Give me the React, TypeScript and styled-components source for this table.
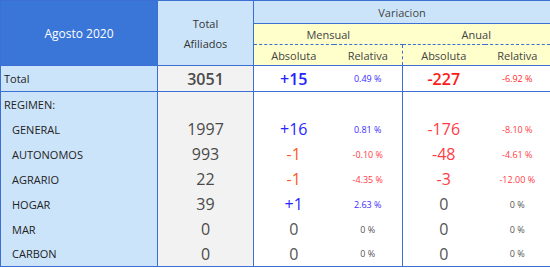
import React from "react";
import styled, { createGlobalStyle } from "styled-components";

const GlobalStyle = createGlobalStyle`
    body {
        margin: 0;
        background: #ffffff;
        font-family: "Open Sans", "Liberation Sans", sans-serif;
    }
`;

const LINE = "#3b6fd3";
const LIGHT = "#cce4fa";
const YELLOW = "#ffffcc";
const GREY = "#f2f2f2";

const Table = styled.table`
    width: 550px;
    table-layout: fixed;
    border-collapse: collapse;
    border: 1px solid ${LINE};
    font-family: "Open Sans", "Liberation Sans", sans-serif;
`;

const HeadRow = styled.tr<{ $h: number }>`
    height: ${(p) => p.$h}px;
`;

const TitleCell = styled.th`
    background: #3a75d8;
    color: #ffffff;
    font-size: 12px;
    font-weight: 400;
    border: 1px solid ${LINE};
`;

const TotalHead = styled.th`
    background: ${LIGHT};
    color: #333;
    font-size: 11px;
    font-weight: 400;
    line-height: 20px;
    border: 1px solid ${LINE};
    padding-top: 2px;
`;

const GroupHead = styled.th`
    background: ${LIGHT};
    color: #444;
    font-size: 11px;
    font-weight: 400;
    border: 1px solid ${LINE};
    padding: 0;
`;

const PeriodHead = styled.th`
    background: ${YELLOW};
    color: #444;
    font-size: 11px;
    font-weight: 400;
    border-bottom: 1px dashed ${LINE};
    padding: 0;
`;

const SubHead = styled.th<{ $dashed?: boolean }>`
    background: ${YELLOW};
    color: #444;
    font-size: 11px;
    font-weight: 400;
    padding: 0;
    border-bottom: 1px solid ${LINE};
    border-right: ${(p) => (p.$dashed ? `1px dashed ${LINE}` : "none")};
`;

const BodyRow = styled.tr<{ $h: number; $line?: boolean }>`
    height: ${(p) => p.$h}px;
    border-bottom: ${(p) => (p.$line ? `1px solid ${LINE}` : "none")};
`;

const LabelCell = styled.td<{ $indent?: boolean }>`
    background: ${LIGHT};
    color: #222;
    font-size: 11px;
    padding: 0 0 0 ${(p) => (p.$indent ? 11 : 3)}px;
    border-right: 1px solid ${LINE};
    white-space: nowrap;
`;

const CountCell = styled.td<{ $bold?: boolean }>`
    background: ${GREY};
    color: #4a4a4a;
    font-size: 16px;
    font-weight: ${(p) => (p.$bold ? 600 : 400)};
    text-align: center;
    padding: 0;
    border-right: 1px solid ${LINE};
`;

const AbsCell = styled.td<{ $color: string; $bold?: boolean }>`
    color: ${(p) => p.$color};
    font-size: 16px;
    font-weight: ${(p) => (p.$bold ? 600 : 400)};
    text-align: center;
    padding: 0;
`;

const PctCell = styled.td<{ $color: string; $end?: boolean }>`
    color: ${(p) => p.$color};
    font-size: 9px;
    text-align: center;
    padding: 0;
    border-right: ${(p) => (p.$end ? `1px solid ${LINE}` : "none")};
`;

const BLUE = "#2626ff";
const PBLUE = "#3b2cff";
const RED = "#ff3b45";
const ORANGE = "#ff5a24";
const GRAY = "#555555";

interface Row {
    label: string;
    total: string;
    mAbs: string;
    mAbsC: string;
    mRel: string;
    mRelC: string;
    aAbs: string;
    aAbsC: string;
    aRel: string;
    aRelC: string;
}

const rows: Row[] = [
    { label: "GENERAL", total: "1997", mAbs: "+16", mAbsC: BLUE, mRel: "0.81 %", mRelC: PBLUE, aAbs: "-176", aAbsC: RED, aRel: "-8.10 %", aRelC: RED },
    { label: "AUTONOMOS", total: "993", mAbs: "-1", mAbsC: ORANGE, mRel: "-0.10 %", mRelC: RED, aAbs: "-48", aAbsC: RED, aRel: "-4.61 %", aRelC: RED },
    { label: "AGRARIO", total: "22", mAbs: "-1", mAbsC: ORANGE, mRel: "-4.35 %", mRelC: RED, aAbs: "-3", aAbsC: RED, aRel: "-12.00 %", aRelC: RED },
    { label: "HOGAR", total: "39", mAbs: "+1", mAbsC: BLUE, mRel: "2.63 %", mRelC: PBLUE, aAbs: "0", aAbsC: GRAY, aRel: "0 %", aRelC: GRAY },
    { label: "MAR", total: "0", mAbs: "0", mAbsC: GRAY, mRel: "0 %", mRelC: GRAY, aAbs: "0", aAbsC: GRAY, aRel: "0 %", aRelC: GRAY },
    { label: "CARBON", total: "0", mAbs: "0", mAbsC: GRAY, mRel: "0 %", mRelC: GRAY, aAbs: "0", aAbsC: GRAY, aRel: "0 %", aRelC: GRAY },
];

const App = (): JSX.Element => {
    return (
        <>
            <GlobalStyle />
            <Table>
                <colgroup>
                    <col style={{ width: 157 }} />
                    <col style={{ width: 96 }} />
                    <col style={{ width: 80 }} />
                    <col style={{ width: 69 }} />
                    <col style={{ width: 82 }} />
                    <col style={{ width: 66 }} />
                </colgroup>
                <thead>
                    <HeadRow $h={23}>
                        <TitleCell rowSpan={3}>Agosto 2020</TitleCell>
                        <TotalHead rowSpan={3}>
                            Total
                            <br />
                            Afiliados
                        </TotalHead>
                        <GroupHead colSpan={4}>Variacion</GroupHead>
                    </HeadRow>
                    <HeadRow $h={21}>
                        <PeriodHead colSpan={2}>Mensual</PeriodHead>
                        <PeriodHead colSpan={2}>Anual</PeriodHead>
                    </HeadRow>
                    <HeadRow $h={21}>
                        <SubHead>Absoluta</SubHead>
                        <SubHead $dashed>Relativa</SubHead>
                        <SubHead>Absoluta</SubHead>
                        <SubHead>Relativa</SubHead>
                    </HeadRow>
                </thead>
                <tbody>
                    <BodyRow $h={26} $line>
                        <LabelCell>Total</LabelCell>
                        <CountCell $bold>3051</CountCell>
                        <AbsCell $color="#2222ff" $bold>+15</AbsCell>
                        <PctCell $color={PBLUE} $end>0.49 %</PctCell>
                        <AbsCell $color="#ff1a1a" $bold>-227</AbsCell>
                        <PctCell $color="#ff2a2a">-6.92 %</PctCell>
                    </BodyRow>
                    <BodyRow $h={25}>
                        <LabelCell>REGIMEN:</LabelCell>
                        <CountCell />
                        <AbsCell $color={GRAY} />
                        <PctCell $color={GRAY} $end />
                        <AbsCell $color={GRAY} />
                        <PctCell $color={GRAY} />
                    </BodyRow>
                    {rows.map((r) => (
                        <BodyRow $h={25} key={r.label}>
                            <LabelCell $indent>{r.label}</LabelCell>
                            <CountCell>{r.total}</CountCell>
                            <AbsCell $color={r.mAbsC}>{r.mAbs}</AbsCell>
                            <PctCell $color={r.mRelC} $end>{r.mRel}</PctCell>
                            <AbsCell $color={r.aAbsC}>{r.aAbs}</AbsCell>
                            <PctCell $color={r.aRelC}>{r.aRel}</PctCell>
                        </BodyRow>
                    ))}
                </tbody>
            </Table>
        </>
    );
};

export default App;
